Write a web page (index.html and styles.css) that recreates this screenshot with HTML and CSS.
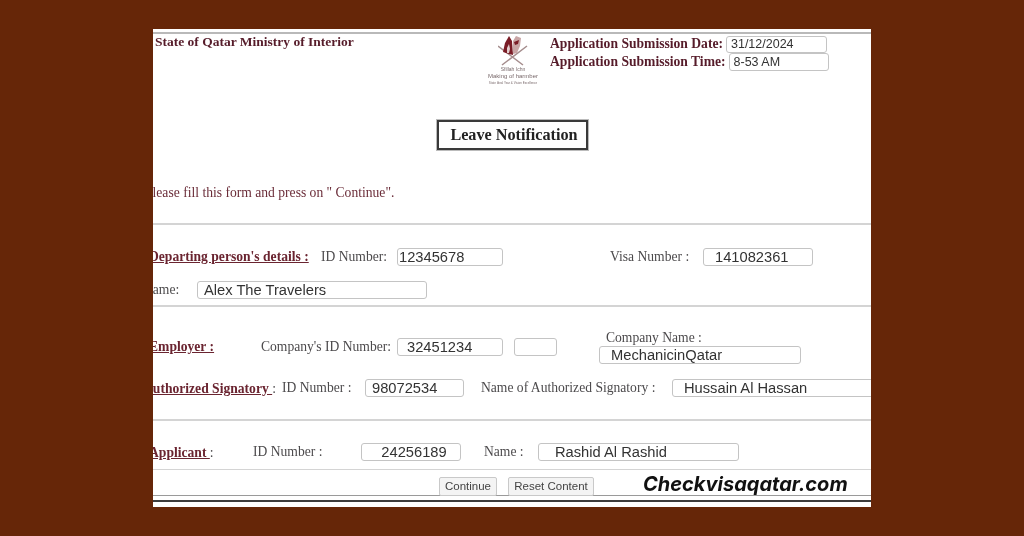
FILE: index.html
```html
<!DOCTYPE html>
<html lang="en">
<head>
    <meta charset="UTF-8">
    <meta name="viewport" content="width=device-width, initial-scale=1.0">
    <title>Leave Notification</title>
    <link rel="stylesheet" href="styles.css">
</head>
<body>
    <div class="sheet">
        <div class="rule rule-top"></div>

        <div class="header">
            <div class="ministry">State of Qatar Ministry of Interior</div>
            <div class="logo">
                <svg class="logo-mark" width="30" height="31" viewBox="0 0 30 31">
                    <path d="M0 11 L25 30 M29 11 L4 30" stroke="#a58d8d" stroke-width="1.5" fill="none"/>
                    <path d="M5 17 L7 8 L11 1 L14 6 L15 20 L11 19 Z" fill="#7a1c26"/>
                    <path d="M15 19 L15 6 L18 1 L23 3 L22 11 L19 18 Z" fill="#c9a5a5"/>
                    <path d="M16 7 L21 5 L20 9 L17 10 Z" fill="#7a1c26"/>
                    <path d="M9 13 L11 9 L12 14 L11 18 L9 18 Z" fill="#e4cfcf"/>
                </svg>
                <div class="logo-line">Sfillah Ichn</div>
                <div class="logo-line logo-main">Making of harmber</div>
                <div class="logo-line logo-small">State Ideal Year &amp; Vision Excellence</div>
            </div>
            <div class="submission">
                <div class="submission-row">
                    <label for="sub-date">Application Submission Date:</label>
                    <input class="field field-date" id="sub-date" type="text" value="31/12/2024">
                </div>
                <div class="submission-row">
                    <label for="sub-time">Application Submission Time:</label>
                    <input class="field field-time" id="sub-time" type="text" value="8-53 AM">
                </div>
            </div>
        </div>

        <div class="title-wrap">
            <div class="title">Leave Notification</div>
        </div>

        <p class="intro">Please fill this form and press on " Continue".</p>

        <div class="rule rule-first"></div>

        <div class="row row-departing">
            <span class="section-name">Departing person's details :</span>
            <span class="text">ID Number:</span>
            <input class="field pad-narrow" type="text" value="12345678">
            <span class="text visa-label">Visa Number :</span>
            <input class="field pad-mid" type="text" value="141082361">
        </div>
        <div class="row row-name">
            <span class="text">Name:</span>
            <input class="field" type="text" value="Alex The Travelers">
        </div>

        <div class="rule rule-second"></div>

        <div class="row row-employer">
            <span class="section-name">Employer :</span>
            <span class="text">Company's ID Number:</span>
            <input class="field pad-id" type="text" value="32451234">
            <input class="field field-blank" type="text" value="">
            <div class="company">
                <span class="text company-label">Company Name :</span>
                <input class="field pad-mid" type="text" value="MechanicinQatar">
            </div>
        </div>
        <div class="row row-signatory">
            <span><span class="section-name">Authorized Signatory </span><span class="text">:</span></span>
            <span class="text">ID Number :</span>
            <input class="field" type="text" value="98072534">
            <span class="text signatory-label">Name of Authorized Signatory :</span>
            <input class="field pad-mid" type="text" value="Hussain Al Hassan">
        </div>

        <div class="rule rule-third"></div>

        <div class="row row-applicant">
            <span><span class="section-name">Applicant </span><span class="text">:</span></span>
            <span class="text">ID Number :</span>
            <input class="field field-center" type="text" value="24256189">
            <span class="text applicant-label">Name :</span>
            <input class="field pad-wide" type="text" value="Rashid Al Rashid">
        </div>

        <div class="rule rule-thin"></div>

        <div class="actions">
            <button class="btn" type="button">Continue</button>
            <button class="btn" type="button">Reset Content</button>
            <span class="brand">Checkvisaqatar.com</span>
        </div>

        <div class="rule rule-grey"></div>
        <div class="rule rule-dark"></div>
    </div>
</body>
</html>
```

FILE: styles.css
```css
body {
    margin: 0;
    height: 536px;
    background-color: #662608;
    display: flex;
    justify-content: center;
    align-items: center;
    font-family: "Liberation Serif", serif;
    overflow: hidden;
}

.sheet {
    width: 718px;
    height: 478px;
    background-color: #fff;
    overflow: hidden;
    filter: blur(0.4px);
}

.rule {
    height: 2px;
    background-color: #d4d4d4;
}

.rule-top {
    margin-top: 3px;
    background-color: #b9b9b9;
}

.rule-first {
    margin-top: 22px;
}

.rule-second {
    margin-top: 6px;
}

.rule-third {
    margin-top: 22px;
}

.rule-thin {
    margin-top: 8px;
    height: 1px;
}

.rule-grey {
    margin-top: -1px;
    height: 1px;
    background-color: #9a9a9a;
}

.rule-dark {
    margin-top: 4px;
    background-color: #3d3d3d;
}

.header {
    display: flex;
    height: 56px;
}

.ministry {
    width: 333px;
    padding-left: 2px;
    font-size: 13.5px;
    font-weight: bold;
    line-height: 16px;
    color: #561c2a;
}

.logo {
    width: 62px;
    text-align: center;
    color: #7a6a6c;
    font-family: "Liberation Sans", sans-serif;
    white-space: nowrap;
}

.logo-mark {
    display: block;
    margin: 1px 0 0 10px;
}

.logo-line {
    width: 50px;
    font-size: 5px;
    line-height: 6px;
}

.logo-main {
    font-size: 6px;
    line-height: 8px;
}

.logo-small {
    font-size: 3px;
    line-height: 6px;
}

.submission {
    padding-top: 1px;
}

.submission-row {
    display: flex;
    align-items: center;
    height: 18px;
}

.submission-row label {
    font-size: 13.6px;
    font-weight: bold;
    color: #561c2a;
    margin-right: 3px;
}

.field {
    box-sizing: border-box;
    height: 18px;
    width: 100%;
    padding: 0 0 0 6px;
    border: 1px solid #c4c4c4;
    border-radius: 3px;
    background-color: #fff;
    font-family: "Liberation Sans", sans-serif;
    font-size: 14.7px;
    color: #333;
}

.field-date {
    width: 101px;
    height: 17px;
    padding-left: 4px;
    font-size: 12.5px;
}

.field-time {
    width: 100px;
    padding-left: 4px;
    font-size: 12.5px;
}

.field-center {
    text-align: center;
}

.field-blank {
    width: 43px;
    margin-left: 11px;
}

.pad-narrow {
    padding-left: 1px;
}

.pad-id {
    padding-left: 9px;
}

.pad-mid {
    padding-left: 11px;
}

.pad-wide {
    padding-left: 16px;
}

.title-wrap {
    margin-top: 30px;
    display: flex;
    padding-left: 284px;
}

.title {
    box-sizing: border-box;
    width: 151px;
    height: 30px;
    padding-left: 3px;
    border: 2px solid #3a3a3a;
    box-shadow: 0 0 0 1px #bbb;
    text-align: center;
    font-size: 16.2px;
    font-weight: bold;
    line-height: 26px;
    color: #222;
}

.intro {
    margin: 35px 0 0 -8px;
    font-size: 13.6px;
    line-height: 16px;
    color: #6a2c38;
}

.row {
    display: grid;
    align-items: center;
    margin-left: -4px;
}

.row-departing {
    margin-top: 23px;
    grid-template-columns: 172px 76px 106px 200px 110px;
}

.row-name {
    margin-top: 15px;
    margin-left: -10px;
    grid-template-columns: 54px 230px;
}

.row-employer {
    margin-top: 24px;
    grid-template-columns: 112px 136px 106px 54px 244px;
}

.row-employer > span,
.row-employer > input {
    margin-bottom: 1px;
}

.row-signatory {
    margin-top: 15px;
    margin-left: -10px;
    grid-template-columns: 139px 83px 99px 208px 220px;
}

.row-applicant {
    margin-top: 22px;
    grid-template-columns: 104px 108px 100px 77px 201px;
}

.section-name {
    font-size: 13.6px;
    font-weight: bold;
    color: #6a2430;
    text-decoration: underline;
    white-space: nowrap;
}

.text {
    font-size: 13.6px;
    color: #4c4a4c;
    white-space: nowrap;
}

.visa-label {
    margin-left: 107px;
}

.signatory-label {
    margin-left: 17px;
}

.applicant-label {
    margin-left: 23px;
}

.company {
    display: flex;
    flex-direction: column;
    margin-left: 42px;
}

.company-label {
    margin-left: 7px;
    line-height: 14px;
}

.company .field {
    width: 202px;
    margin-top: 1px;
}

.actions {
    display: flex;
    align-items: flex-end;
    height: 19px;
    margin-top: 7px;
    padding-left: 286px;
}

.btn {
    box-sizing: border-box;
    height: 19px;
    width: 58px;
    padding: 0 0 2px;
    margin-right: 11px;
    border: 1px solid #c9c9c9;
    border-radius: 2px;
    background-color: #f4f4f4;
    font-family: "Liberation Sans", sans-serif;
    font-size: 11.5px;
    color: #444;
}

.btn + .btn {
    width: 86px;
    margin-right: 49px;
}

.brand {
    align-self: center;
    margin-bottom: 4px;
    font-family: "Inter", sans-serif;
    font-size: 20px;
    font-weight: 700;
    font-style: italic;
    line-height: 19px;
    color: #111;
    white-space: nowrap;
}
```
